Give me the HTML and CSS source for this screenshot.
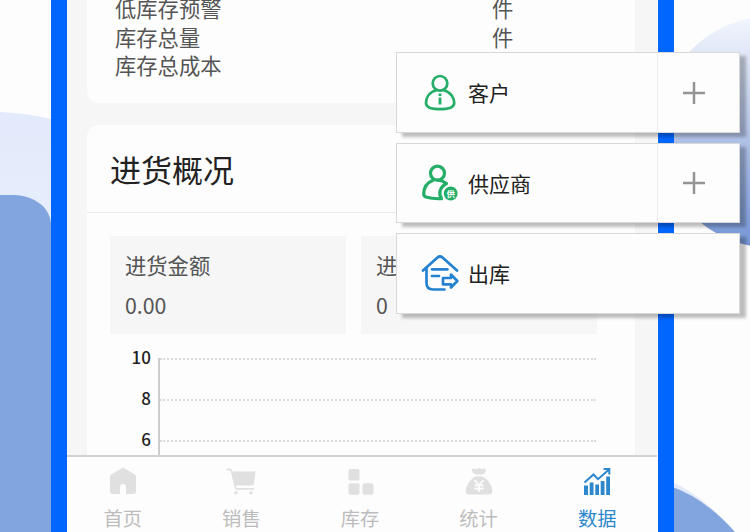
FILE: index.html
```html
<!DOCTYPE html>
<html lang="zh-CN">
<head>
<meta charset="utf-8">
<title>进货概况</title>
<link rel="stylesheet" href="styles.css">
</head>
<body>
<svg class="backdrop" viewBox="0 0 750 532" aria-hidden="true">
  <defs>
    <linearGradient id="orb" x1="0" y1="0" x2="0" y2="1">
      <stop offset="0" stop-color="#f3f6fd"/>
      <stop offset="0.15" stop-color="#e1e8f7"/>
      <stop offset="0.5" stop-color="#b3c4e7"/>
      <stop offset="1" stop-color="#7495d4"/>
    </linearGradient>
    <linearGradient id="haze" x1="0" y1="0" x2="0" y2="1">
      <stop offset="0" stop-color="#e2eafb"/>
      <stop offset="0.25" stop-color="#e6edfc"/>
    </linearGradient>
  </defs>
  <path d="M0 112Q28 113 60 121V532H0Z" fill="url(#haze)"/>
  <path d="M0 195H14C35 196 49 207 51 223V532H0Z" fill="#82a5df"/>
  <circle cx="773" cy="132" r="116" fill="url(#orb)"/>
  <path d="M670 481Q703 495 734 532H670Z" fill="#e3eafa"/>
  <path d="M670 486Q705 498 735 532H670Z" fill="#82a5df"/>
</svg>

<div class="phone">
  <main class="screen">
    <section class="card stock">
      <dl class="rows">
        <div class="row"><dt>低库存预警</dt><dd>件</dd></div>
        <div class="row"><dt>库存总量</dt><dd>件</dd></div>
        <div class="row"><dt>库存总成本</dt><dd></dd></div>
      </dl>
    </section>
    <section class="card purchase">
      <h2>进货概况</h2>
      <div class="metrics">
        <div class="metric"><span>进货金额</span><span>0.00</span></div>
        <div class="metric"><span>进货数量</span><span>0</span></div>
      </div>
      <div class="chart">
        <div class="labels"><span>10</span><span>8</span><span>6</span></div>
        <div class="plot"><i></i><i></i><i></i></div>
      </div>
    </section>
  </main>
  <nav class="tabs">
    <a class="tab">
      <svg viewBox="0 0 28 28"><path d="M14 0.7Q14.6.7 15.3 1.2L25.8 7.6Q27 8.4 27 10V24.5Q27 27 24.5 27H17V19.5Q17 17 14 17T11 19.5V27H3.5Q1 27 1 24.500V10Q1 8.400 2.200 7.600L12.700 1.200Q13.400.7 14 .7Z"/></svg>
      <span>首页</span>
    </a>
    <a class="tab">
      <svg viewBox="0 0 28 28"><path d="M-.5 2.500H2.500Q4.200 2.500 4.700 4.500L8.500 20.500Q8.800 21.800 10 21.800H27" fill="none" stroke="#e0e0e0" stroke-width="1.800"/><path d="M5.200 4.500H28.500L27 16.500Q26.700 18.500 24.700 18.500H8.500Z"/><circle cx="9" cy="25.700" r="1.700"/><circle cx="24" cy="25.700" r="1.700"/></svg>
      <span>销售</span>
    </a>
    <a class="tab">
      <svg viewBox="0 0 28 28"><rect x="2.500" y="2" width="11" height="11.500" rx="2"/><rect x="2.500" y="16.300" width="11" height="11.500" rx="2"/><rect x="16.500" y="16.300" width="11" height="11.500" rx="2"/></svg>
      <span>库存</span>
    </a>
    <a class="tab">
      <svg viewBox="0 0 28 28"><path d="M7 3.500Q6.700 1 9 1.500Q11 2.700 12.500 1.500Q14 .5 15.500 1.500Q17 2.700 19 1.500Q21.300 1 21 3.500Q20 7 17 7.500H11Q8 7 7 3.500Z"/><path d="M10.500 9.500H17.500C22 12 26.500 17 27.300 23Q27.800 27.500 24 27.500H4Q.2 27.500.7 23C1.500 17 6 12 10.500 9.500Z"/><path d="M9.500 13L14 18L18.500 13M14 18V25M9.500 18.400H18.500M9.500 21.600H18.500" fill="none" stroke="#fdfdfd" stroke-width="1.800"/></svg>
      <span>统计</span>
    </a>
    <a class="tab active">
      <svg viewBox="0 0 28 28"><path d="M1 18.500H5V28H1ZM6.700 15.500H10.500V28H6.700ZM12.300 17.500H16V28H12.300ZM17.700 14H21.500V28H17.700ZM23.200 9.500H27V28H23.200Z"/><path d="M1.500 15.500L10.500 7.500L15 12.200L26 2.500M20.500 2H26.300V7.500" fill="none" stroke="#2d87cd" stroke-width="2"/></svg>
      <span>数据</span>
    </a>
  </nav>
</div>

<aside class="shortcuts">
  <div class="shortcut">
    <svg class="mark green" viewBox="0 0 38 38"><circle cx="19" cy="9.300" r="7.300"/><path d="M15 16.200C7.500 18.500 5 24.500 5 29C5 33.500 11 35.200 19 35.200S33.200 33.500 33.200 29C33.200 24.500 30.500 18.500 23 16.200"/><path class="flat" d="M19 23.500V30.500M19 19.500V22"/></svg>
    <span class="name">客户</span>
    <span class="add"><svg viewBox="0 0 22 22"><path d="M11 0V22M0 11H22"/></svg></span>
  </div>
  <div class="shortcut">
    <svg class="mark green bold" viewBox="0 0 38 38"><circle cx="16.500" cy="9.200" r="7"/><path d="M12 16.200C5 19 2.700 25 2.700 30Q2.700 32 5 33Q11 35 20.500 34.700C17 29 19 23 25.500 19.500Q21.500 16.500 17 16"/><circle class="badge" cx="29.700" cy="29.500" r="6.900"/><text x="29.700" y="32.500">供</text></svg>
    <span class="name">供应商</span>
    <span class="add"><svg viewBox="0 0 22 22"><path d="M11 0V22M0 11H22"/></svg></span>
  </div>
  <div class="shortcut">
    <svg class="mark blue" viewBox="0 0 38 38"><path d="M2 15.500L16.500 2.500Q19 .5 21.500 2.500L36 15.500M5.500 13V28Q5.500 34.500 12 34.500H23.500M11 14.300H26.500M11 21H18"/><path d="M22 23H30V19.500L36.300 26L30 32.500V29.300H22Z"/></svg>
    <span class="name">出库</span>
  </div>
</aside>
</body>
</html>
```

FILE: styles.css
```css
* { box-sizing: border-box; }
body {
  margin: 0;
  height: 532px;
  overflow: hidden;
  position: relative;
  background: #fdfdfd;
  font-family: "Noto Sans CJK SC", "Noto Sans", sans-serif;
  color: #555;
}
.backdrop { position: absolute; inset: 0; width: 750px; height: 532px; }
.phone {
  position: relative;
  display: flex;
  flex-direction: column;
  width: 623px;
  height: 532px;
  margin-left: 51px;
  border: solid #0066fe;
  border-width: 0 16px;
  background: #fdfdfd;
}
.screen {
  height: 455px;
  margin-right: 1px;
  padding: 0 22px 0 20px;
  overflow: hidden;
  background: #f6f6f6;
}
.card { background: #fdfdfd; }
.stock { height: 103px; border-radius: 0 0 12px 12px; padding: 0 28px; overflow: hidden; }
.rows { margin: -6px 0 0; }
.row { display: flex; height: 28.500px; line-height: 28.500px; font-size: 21.300px; }
.row dt { width: 377px; }
.row dd { margin: 0; }
.purchase { margin-top: 22px; height: 340px; border-radius: 12px 12px 0 0; }
h2 {
  margin: 0;
  height: 88px;
  padding-left: 23px;
  border-bottom: 1px solid #e9e9e9;
  font-size: 31px;
  font-weight: 400;
  line-height: 87px;
  color: #222;
}
.metrics { display: flex; gap: 15px; padding: 23px 0 0 23px; }
.metric {
  display: flex;
  flex-direction: column;
  width: 236px;
  height: 98px;
  padding: 9px 15px;
  background: #f6f6f6;
  font-size: 21.300px;
  line-height: 40px;
}
.chart { display: flex; padding: 24px 0 0 23px; }
.labels {
  display: flex;
  flex-direction: column;
  width: 41px;
  margin: -22px 7px 0 0;
  font-size: 17px;
  line-height: 41px;
  font-weight: 500;
  text-align: right;
  color: #222;
}
.plot { width: 438px; height: 140px; border-left: 2px solid #ccc; }
.plot i { display: block; height: 41px; border-top: 2px dotted #dadada; }
.tabs {
  display: grid;
  grid-template-columns: repeat(5, 118.600px);
  height: 77px;
  margin-right: 1px;
  border-top: 2px solid #d2d2d2;
}
.tab {
  display: flex;
  flex-direction: column;
  align-items: center;
  margin-left: -7px;
  padding-top: 10px;
  font-size: 19.300px;
  line-height: 28px;
  color: #bcbcbc;
}
.tab svg { width: 28px; height: 28px; margin-bottom: 9px; fill: #e0e0e0; overflow: visible; }
.tab.active { color: #2d87cd; }
.tab.active svg { fill: #2d87cd; }
.shortcuts {
  position: absolute;
  top: 52px;
  left: 396px;
  display: flex;
  flex-direction: column;
  gap: 10px;
  width: 344px;
}
.shortcut {
  display: flex;
  align-items: center;
  height: 80.500px;
  padding-left: 24px;
  border: 1px solid #d8d8d8;
  background: #fdfdfd;
  box-shadow: 6px 4px 3px rgba(0, 0, 0, .25);
}
.mark { width: 38px; height: 38px; fill: none; stroke-width: 2.700; stroke-linecap: round; stroke-linejoin: round; }
.bold { stroke-width: 3.200; }
.flat { stroke-width: 2.800; stroke-linecap: butt; }
.green { stroke: #24ae67; }
.blue { stroke: #2482d1; }
.badge { fill: #24ae67; stroke: none; }
.mark text { fill: #fff; stroke: none; font-size: 8.500px; font-weight: 700; text-anchor: middle; }
.name { margin-left: 9px; font-size: 21px; color: #222; }
.add {
  display: flex;
  align-items: center;
  justify-content: center;
  width: 82px;
  height: 100%;
  margin-left: auto;
  padding: 1px 9px 0 0;
  border-left: 1px solid #eee;
}
.add svg { width: 22px; height: 22px; fill: none; stroke: #949494; stroke-width: 2.500; }
.shortcut > .mark { margin-top: 1px; }
```
